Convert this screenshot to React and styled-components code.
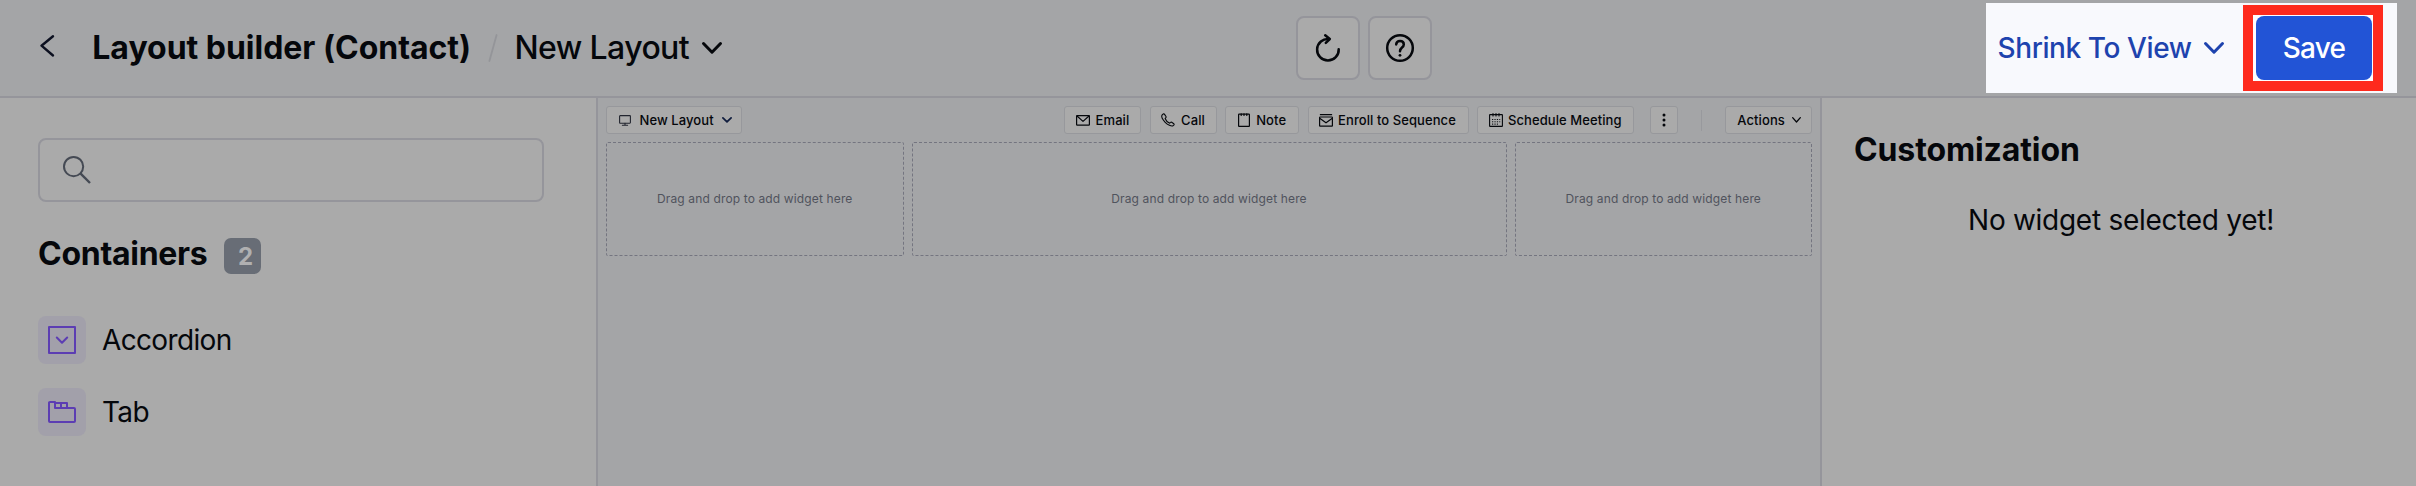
import React from "react";
import styled, { createGlobalStyle } from "styled-components";

const ink = "#05070b";
const line = "#95959b";
const panel = "#aaaaaa";
const canvas = "#a4a5a7";

const GlobalStyle = createGlobalStyle`
  * { box-sizing: border-box; }
  body { margin: 0; background: ${canvas}; font-family: Inter, "Liberation Sans", sans-serif; color: ${ink}; }
  svg { display: block; flex: none; overflow: visible; }
  button { font: inherit; color: inherit; cursor: pointer; }
`;

const Page = styled.div`
  display: flex;
  flex-direction: column;
  width: 2416px;
  height: 486px;
  overflow: hidden;
`;

const Header = styled.header`
  display: flex;
  align-items: center;
  height: 98px;
  flex: none;
  border-bottom: 2px solid ${line};
  background: ${canvas};
`;

const Breadcrumb = styled.div`
  display: flex;
  align-items: center;
  width: 1296px;
  padding-left: 40px;
  white-space: nowrap;
`;

const Title = styled.h1`
  margin: 0 0 0 36.3px;
  width: 396.2px;
  font-size: 32px;
  font-weight: 650;
  line-height: 40px;
  letter-spacing: -0.02px;
`;

const LayoutName = styled.span`
  margin-left: 16px;
  width: 187.5px;
  font-size: 32px;
  font-weight: 450;
  line-height: 38px;
  letter-spacing: -0.6px;
`;

const Tools = styled.div`
  display: flex;
  gap: 8px;
  width: 690px;
`;

const ToolButton = styled.button`
  display: flex;
  align-items: center;
  justify-content: center;
  width: 64px;
  height: 64px;
  padding: 0;
  border: 2px solid ${line};
  border-radius: 8px;
  background: ${panel};
`;

const Spotlight = styled.div`
  display: flex;
  align-items: center;
  width: 411px;
  height: 90px;
  padding-left: 11.5px;
  background: #f8f9fd;
`;

const ViewMode = styled.button`
  display: flex;
  align-items: center;
  width: 245.5px;
  padding: 0;
  border: 0;
  background: none;
  color: #1e43ae;
  font-size: 28px;
  font-weight: 500;
  letter-spacing: -0.4px;
  white-space: nowrap;
`;

const ViewLabel = styled.span`
  width: 206.5px;
  text-align: left;
`;

const SaveFrame = styled.div`
  display: flex;
  width: 140px;
  height: 86px;
  padding: 1px 1px 1px 3px;
  border: 10px solid #fe2a1d;
  background: #fdfdff;
`;

const SaveButton = styled.button`
  flex: 1;
  padding: 0;
  border: 0;
  border-radius: 8px;
  background: #2254d6;
  color: #ffffff;
  font-size: 28px;
  font-weight: 500;
  letter-spacing: -0.8px;
`;

const Body = styled.div`
  display: flex;
  flex: 1;
  min-height: 0;
`;

const Sidebar = styled.aside`
  width: 598px;
  padding: 40px 52px 0 38px;
  border-right: 2px solid ${line};
  background: ${panel};
`;

const SearchBox = styled.div`
  display: flex;
  align-items: center;
  height: 64px;
  padding-left: 23px;
  border: 2px solid ${line};
  border-radius: 8px;
`;

const SectionHead = styled.div`
  display: flex;
  align-items: center;
  height: 36px;
  margin-top: 36px;
`;

const SectionTitle = styled.h2`
  margin: 0;
  width: 186px;
  padding-bottom: 5px;
  font-size: 32px;
  font-weight: 650;
  line-height: 36px;
  letter-spacing: -0.28px;
`;

const Count = styled.span`
  width: 37px;
  height: 36px;
  padding-left: 14px;
  border-radius: 7px;
  background: #686d76;
  color: #b0b0b1;
  font-size: 24px;
  font-weight: 700;
  line-height: 37px;
`;

const WidgetList = styled.div`
  display: flex;
  flex-direction: column;
  gap: 24px;
  margin-top: 42px;
`;

const Widget = styled.div`
  display: flex;
  align-items: center;
  gap: 16px;
  height: 48px;
  font-size: 28px;
  letter-spacing: -0.65px;
`;

const WidgetTile = styled.span`
  display: flex;
  align-items: center;
  justify-content: center;
  width: 48px;
  height: 48px;
  border-radius: 8px;
  background: #a2a0aa;
  color: #5c3db3;
`;

const Canvas = styled.main`
  width: 1222px;
  padding: 8px;
  background: ${canvas};
`;

const Toolbar = styled.div`
  display: flex;
  align-items: center;
  justify-content: space-between;
  height: 28px;
`;

const ActionGroup = styled.div`
  display: flex;
  align-items: center;
  gap: 8.4px;
`;

const Action = styled.button`
  display: flex;
  align-items: center;
  gap: ${(p) => p.$gap ?? 5}px;
  width: ${(p) => p.$width}px;
  height: 28px;
  padding: 0 0 0 ${(p) => p.$pad ?? 10.5}px;
  border: 1px solid #97989c;
  border-radius: 3px;
  background: ${panel};
  font-size: 13px;
  font-weight: 500;
  letter-spacing: 0.08px;
  white-space: nowrap;
`;

const MoreButton = styled(Action)`
  justify-content: center;
  margin-left: 7.6px;
  padding: 0;
`;

const Separator = styled.i`
  width: 1px;
  height: 21px;
  margin: 0 15px 0 14.6px;
  background: #98999d;
`;

const Columns = styled.div`
  display: grid;
  grid-template-columns: 1fr 2fr 1fr;
  gap: 8px;
  margin-top: 8px;
`;

const DropZone = styled.div`
  display: flex;
  align-items: center;
  justify-content: center;
  height: 114px;
  padding-bottom: 1px;
  border: 1px dashed #747580;
  border-radius: 2px;
  color: #50535d;
  font-size: 12px;
  letter-spacing: 0.135px;
`;

const Inspector = styled.aside`
  flex: 1;
  padding: 33px 28px 0 32px;
  border-left: 2px solid ${line};
  background: ${panel};
`;

const InspectorTitle = styled.h2`
  margin: 0;
  font-size: 32px;
  font-weight: 650;
  line-height: 38px;
  letter-spacing: -0.12px;
`;

const EmptyNote = styled.p`
  margin: 33px 0 0;
  font-size: 28px;
  line-height: 36px;
  letter-spacing: -0.28px;
  text-align: center;
`;

const Icon = ({ w, h, sw = 1.3, children, ...rest }) => (
  <svg width={w} height={h} viewBox={`0 0 ${w} ${h}`} fill="none" stroke="currentColor" strokeWidth={sw} strokeLinecap="round" strokeLinejoin="round" {...rest}>
    {children}
  </svg>
);

const Chevron = ({ w, h, sw, color }) => (
  <Icon w={w} h={h} sw={sw} color={color}>
    <path d={`M${sw / 2} ${sw / 2}L${w / 2} ${h - sw / 2 - 0.3}L${w - sw / 2} ${sw / 2}`} />
  </Icon>
);

const BackGlyph = styled(Icon)`
  margin-top: -4px;
`;

const BackIcon = () => (
  <BackGlyph w={16} h={22} sw={2.4} color="#0c1020">
    <path d="M13 1.2L1.5 10.7L13 20.5" />
  </BackGlyph>
);

const SlashIcon = () => (
  <Icon w={10} h={28} sw={1.8} color="#949599">
    <path d="M8.6 1L1.4 27" />
  </Icon>
);

const RefreshIcon = () => (
  <Icon w={28} h={28} sw={2.5}>
    <path d="M24.7 15.2A10.8 10.8 0 1 1 15 5" />
    <path d="M11.2 1.2L15.8 5L11.8 8.8" />
  </Icon>
);

const HelpIcon = () => (
  <Icon w={28} h={28} sw={2.5}>
    <circle cx="14" cy="14" r="12.8" />
    <path d="M10.2 10.4C10.4 8.2 12 7 14 7C16.2 7 17.8 8.4 17.8 10.4C17.8 13.6 14 13.4 14 17.2" />
    <circle cx="14" cy="21.3" r="1.4" fill="currentColor" stroke="none" />
  </Icon>
);

const SearchIcon = () => (
  <Icon w={28} h={28} sw={2} color="#454a54" strokeLinecap="butt">
    <circle cx="10.6" cy="10.6" r="9.6" />
    <path d="M17.4 17.4L27 27" strokeWidth="2.4" />
  </Icon>
);

const AccordionIcon = () => (
  <Icon w={28} h={28} sw={2}>
    <rect x="1" y="1" width="26" height="26" />
    <path d="M8.8 11.5L14 16.8L19.2 11.5" />
  </Icon>
);

const TabIcon = () => (
  <Icon w={28} h={22} sw={2}>
    <path d="M1 1.5Q1 1 2 1H7V7H26Q27 7 27 8V20Q27 21 26 21H2Q1 21 1 20Z" />
    <path d="M7 2H19V7M13 2V7" />
  </Icon>
);

const MonitorIcon = () => (
  <Icon w={12} h={11} sw={1.1} color="#22252f">
    <rect x="0.6" y="0.6" width="10.8" height="7.6" rx="0.6" />
    <path d="M6 8.2V10.2M3.4 10.3H8.6" />
  </Icon>
);

const MailIcon = () => (
  <Icon w={14} h={11} sw={1.2}>
    <rect x="0.6" y="0.6" width="12.8" height="9.6" rx="0.6" />
    <path d="M1 1L7 6.4L13 1" />
  </Icon>
);

const PhoneIcon = () => (
  <Icon w={14} h={14} sw={1.1}>
    <path d="M2.2 1L1 2.1C0.3 3.4 1.8 6.8 4.2 9.3C6.7 11.8 10.4 13.6 11.8 12.9L13 11.8C13.3 11.4 13.2 11 12.8 10.7L10.7 9.3C10.3 9.1 9.9 9.1 9.6 9.4L8.7 10.2C7.2 9.6 4.7 7.1 4.1 5.5L4.9 4.6C5.2 4.3 5.2 3.9 5 3.5L3.4 1.1C3.1 0.7 2.6 0.6 2.2 1Z" />
  </Icon>
);

const NoteIcon = () => (
  <Icon w={12} h={14} sw={1.2}>
    <rect x="0.6" y="1.2" width="10.8" height="12.2" rx="0.5" />
    <path d="M3.2 0.8V2.4M6 0.8V2.4M8.8 0.8V2.4" />
  </Icon>
);

const SequenceIcon = () => (
  <Icon w={14} h={13} sw={1.2}>
    <path d="M1.4 0.7H12.6" />
    <rect x="0.6" y="3" width="12.8" height="9.2" rx="0.5" />
    <path d="M1 4.6L7 8.8L13 4.6" />
  </Icon>
);

const CalendarIcon = () => (
  <Icon w={14} h={14} sw={1.1}>
    <rect x="0.6" y="1.6" width="12.8" height="11.8" rx="0.5" />
    <path d="M4 0.5V3M10 0.5V3M7 0.5V3" />
    <path d="M3.5 6.5H10.8M3.5 8.8H10.8M3.5 11.1H8.5" strokeDasharray="0.3 2.1" />
  </Icon>
);

const MoreIcon = () => (
  <Icon w={4} h={14} stroke="none" fill="currentColor">
    <circle cx="2" cy="2" r="1.5" />
    <circle cx="2" cy="7" r="1.5" />
    <circle cx="2" cy="12" r="1.5" />
  </Icon>
);

const actions = [
  { label: "Email", width: 77, gap: 5.7, icon: <MailIcon /> },
  { label: "Call", width: 67.3, gap: 5.8, icon: <PhoneIcon /> },
  { label: "Note", width: 73.7, gap: 6, pad: 11.7, icon: <NoteIcon /> },
  { label: "Enroll to Sequence", width: 161.5, icon: <SequenceIcon /> },
  { label: "Schedule Meeting", width: 156.5, icon: <CalendarIcon /> },
];

const widgets = [
  { label: "Accordion", icon: <AccordionIcon /> },
  { label: "Tab", icon: <TabIcon /> },
];

export default function App() {
  return (
    <Page>
      <GlobalStyle />
      <Header>
        <Breadcrumb>
          <BackIcon />
          <Title>Layout builder (Contact)</Title>
          <SlashIcon />
          <LayoutName>New Layout</LayoutName>
          <Chevron w={20} h={12} sw={3} />
        </Breadcrumb>
        <Tools>
          <ToolButton aria-label="Refresh"><RefreshIcon /></ToolButton>
          <ToolButton aria-label="Help"><HelpIcon /></ToolButton>
        </Tools>
        <Spotlight>
          <ViewMode>
            <ViewLabel>Shrink To View</ViewLabel>
            <Chevron w={20} h={12} sw={3} />
          </ViewMode>
          <SaveFrame>
            <SaveButton>Save</SaveButton>
          </SaveFrame>
        </Spotlight>
      </Header>
      <Body>
        <Sidebar>
          <SearchBox><SearchIcon /></SearchBox>
          <SectionHead>
            <SectionTitle>Containers</SectionTitle>
            <Count>2</Count>
          </SectionHead>
          <WidgetList>
            {widgets.map((w) => (
              <Widget key={w.label}>
                <WidgetTile>{w.icon}</WidgetTile>
                {w.label}
              </Widget>
            ))}
          </WidgetList>
        </Sidebar>
        <Canvas>
          <Toolbar>
            <Action $width={136} $gap={8.5} $pad={12}>
              <MonitorIcon />
              New Layout
              <Chevron w={10} h={6} sw={1.8} color="#101d3e" />
            </Action>
            <ActionGroup>
              {actions.map((a) => (
                <Action key={a.label} $width={a.width} $gap={a.gap} $pad={a.pad}>
                  {a.icon}
                  {a.label}
                </Action>
              ))}
              <MoreButton $width={28} aria-label="More"><MoreIcon /></MoreButton>
              <Separator />
              <Action $width={86.7} $gap={7} $pad={11}>
                Actions
                <Chevron w={9} h={6} sw={1.3} />
              </Action>
            </ActionGroup>
          </Toolbar>
          <Columns>
            {[0, 1, 2].map((n) => (
              <DropZone key={n}>Drag and drop to add widget here</DropZone>
            ))}
          </Columns>
        </Canvas>
        <Inspector>
          <InspectorTitle>Customization</InspectorTitle>
          <EmptyNote>No widget selected yet!</EmptyNote>
        </Inspector>
      </Body>
    </Page>
  );
}
